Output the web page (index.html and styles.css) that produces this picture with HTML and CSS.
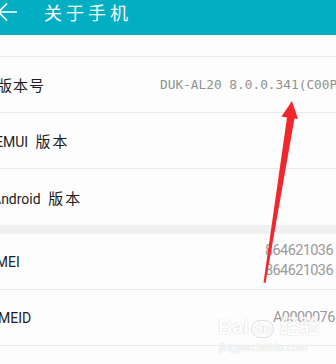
FILE: index.html
```html
<!DOCTYPE html>
<html lang="zh">
<head>
<meta charset="utf-8">
<title>关于手机</title>
<link rel="stylesheet" href="styles.css">
</head>
<body>
<div class="screen">
  <header class="bar">
    <svg class="back" width="18" height="24" viewBox="0 0 18 24"><path d="M-2 12H17M7 3.5L-1.5 12L7 20.5" fill="none" stroke="#fff" stroke-width="1.6"/></svg>
    <h1 class="title">关于手机</h1>
  </header>
  <div class="row row-top"></div>
  <div class="row">
    <span class="label cjk">版本号</span>
    <span class="val val-build">DUK-AL20 8.0.0.341(C00P</span>
  </div>
  <div class="row">
    <span class="label">EMUI <span class="zh">版本</span></span>
  </div>
  <div class="row row-last">
    <span class="label label-android">Android <span class="zh">版本</span></span>
  </div>
  <div class="gap"></div>
  <div class="row">
    <span class="label label-imei">IMEI</span>
    <span class="val val-imei num"><span class="line">864621036</span><span class="line">864621036</span></span>
  </div>
  <div class="row">
    <span class="label label-meid">MEID</span>
    <span class="val val-meid num">A0000076</span>
  </div>
  <svg class="arrow" width="336" height="364" viewBox="0 0 336 364"><polygon points="292,101 298,119 294.5,118.5 265.5,283 263.5,282.5 287,117.5 281.5,116.5" fill="#f0282d"/></svg>
  <div class="mark">
    <div class="mark-logo">Bai<span class="du">du</span> 经验</div>
    <div class="mark-url">jingyan.baidu.com</div>
  </div>
</div>
</body>
</html>
```
FILE: styles.css
```css
html, body {
  margin: 0;
  padding: 0;
  background: #fdfdfd;
}
.screen {
  position: relative;
  width: 336px;
  height: 364px;
  overflow: hidden;
  font-family: Roboto, "Noto Sans CJK SC", sans-serif;
  background: #fdfdfd;
}
.bar {
  height: 35px;
  background: #02aec2;
  display: flex;
  align-items: flex-start;
}
.back {
  flex: none;
  display: block;
}
.title {
  margin: 0 0 0 26px;
  font-family: "Noto Sans CJK SC", sans-serif;
  font-weight: 400;
  font-size: 18px;
  line-height: 24px;
  letter-spacing: 4px;
  color: #fff;
}
.row {
  height: 55px;
  border-bottom: 1px solid #e9e9e9;
  display: flex;
  align-items: center;
  overflow: hidden;
  background: #fdfdfd;
  white-space: nowrap;
}
.row-top {
  height: 21px;
}
.row-last {
  border-bottom: none;
  height: 56px;
}
.gap {
  height: 9px;
  background: #f1f1f1;
}
.label {
  flex: none;
  margin-left: -5px;
  font-size: 14px;
  color: #1e1e1e;
}
.label.cjk {
  margin-left: -3px;
  font-family: "Noto Sans CJK SC", sans-serif;
  font-size: 15px;
  letter-spacing: 1px;
}
.label-android {
  margin-left: -8px;
}
.label-imei {
  margin-left: -8px;
}
.label-meid {
  margin-left: -2px;
}
.zh {
  font-family: "Noto Sans CJK SC", sans-serif;
  font-size: 15px;
  letter-spacing: 2px;
  margin-left: 4px;
}
.val {
  flex: none;
  margin-left: auto;
  overflow: hidden;
  white-space: nowrap;
  color: #8a8a8a;
}
.val-build {
  width: 176px;
  font-family: "DejaVu Sans Mono", "Liberation Mono", monospace;
  font-size: 12.8px;
  color: #909090;
}
.num {
  font-family: Roboto, sans-serif;
  font-size: 14.5px;
  color: #9a9a9a;
  letter-spacing: -0.6px;
}
.val-imei {
  width: 71px;
  display: flex;
  flex-direction: column;
  line-height: 20px;
  margin-top: -2px;
}
.val-meid {
  width: 63px;
}
.arrow {
  position: absolute;
  left: 0;
  top: 0;
  pointer-events: none;
}
.mark {
  position: absolute;
  left: 218px;
  top: 316px;
  color: #fff;
  font-family: "Liberation Sans", "Noto Sans CJK SC", sans-serif;
  text-shadow: 0 0 1px #d0d0d0, 0 0 1px #d0d0d0;
  opacity: 0.85;
}
.mark-logo {
  font-size: 20px;
  font-weight: 700;
  line-height: 22px;
}
.du {
  font-size: 14px;
  border: 1px solid #dadada;
  border-radius: 9px;
  padding: 0 2px;
  margin-left: 2px;
}
.mark-url {
  font-size: 11px;
  line-height: 13px;
  margin-left: 1px;
  margin-top: 1px;
}
```
